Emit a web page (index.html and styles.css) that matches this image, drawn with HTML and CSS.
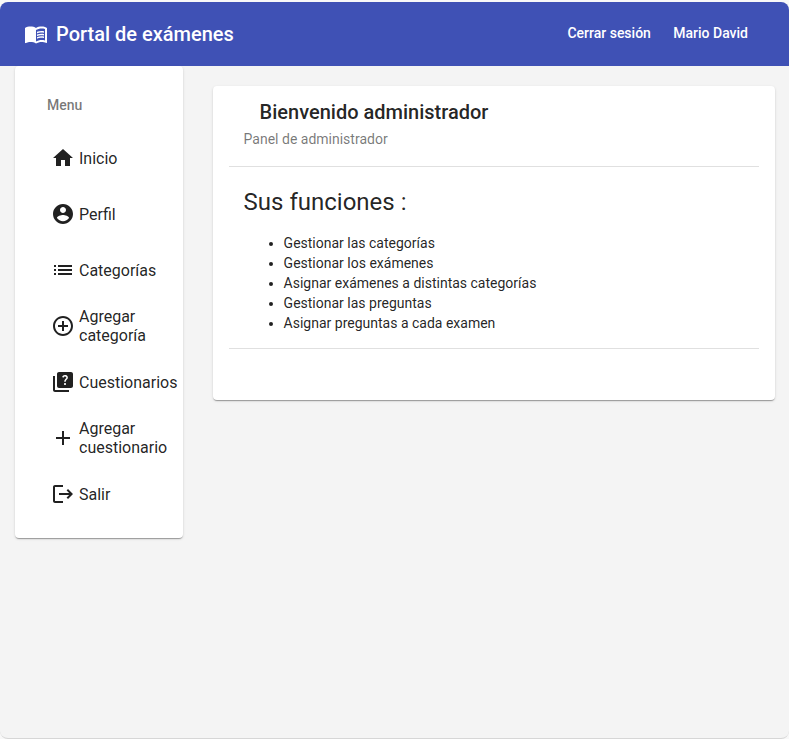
FILE: index.html
```html
<!DOCTYPE html>
<html lang="es">
<head>
<meta charset="utf-8">
<title>Portal de exámenes</title>
<link rel="stylesheet" href="styles.css">
</head>
<body>
<div class="window">
  <header class="toolbar">
    <svg class="icon" viewBox="0 0 24 24"><path d="M21 5c-1.11-.35-2.33-.5-3.5-.5-1.95 0-4.05.4-5.5 1.5-1.45-1.1-3.55-1.5-5.5-1.5S2.45 4.9 1 6v14.65c0 .25.25.5.5.5.1 0 .15-.05.25-.05C3.1 20.45 5.05 20 6.5 20c1.95 0 4.05.4 5.5 1.5 1.35-.85 3.8-1.5 5.5-1.5 1.65 0 3.35.3 4.75 1.05.1.05.15.05.25.05.25 0 .5-.25.5-.5V6c-.6-.45-1.25-.75-2-1zm0 13.5c-1.1-.35-2.3-.5-3.5-.5-1.7 0-4.15.65-5.5 1.5V8c1.35-.85 3.8-1.5 5.5-1.5 1.2 0 2.4.15 3.5.5v11.5z"/><path d="M17.5 10.5c.88 0 1.73.09 2.5.26V9.24c-.79-.15-1.64-.24-2.5-.24-1.7 0-3.24.29-4.5.83v1.66c1.13-.64 2.7-.99 4.5-.99zM13 12.49v1.66c1.13-.64 2.7-.99 4.5-.99.88 0 1.73.09 2.5.26V11.9c-.79-.15-1.64-.24-2.5-.24-1.7 0-3.24.3-4.5.83zM17.5 14.33c-1.7 0-3.24.29-4.5.83v1.66c1.13-.64 2.7-.99 4.5-.99.88 0 1.73.09 2.5.26v-1.52c-.79-.16-1.64-.24-2.5-.24z"/></svg>
    <h1 class="brand">Portal de exámenes</h1>
    <nav class="actions"><a>Cerrar sesión</a><a>Mario David</a></nav>
  </header>
  <div class="layout">
    <aside class="card sidebar">
      <h3 class="subheader">Menu</h3>
      <a class="item"><svg class="icon" viewBox="0 0 24 24"><path d="M10 20v-6h4v6h5v-8h3L12 3 2 12h3v8z"/></svg><span>Inicio</span></a>
      <a class="item"><svg class="icon" viewBox="0 0 24 24"><path d="M12 2C6.48 2 2 6.48 2 12s4.48 10 10 10 10-4.48 10-10S17.52 2 12 2zm0 3c1.66 0 3 1.34 3 3s-1.34 3-3 3-3-1.34-3-3 1.34-3 3-3zm0 14.2c-2.5 0-4.71-1.28-6-3.22.03-1.99 4-3.08 6-3.08 1.99 0 5.97 1.09 6 3.08-1.29 1.94-3.5 3.22-6 3.22z"/></svg><span>Perfil</span></a>
      <a class="item"><svg class="icon" viewBox="0 0 24 24"><path d="M3 13h2v-2H3v2zm0 4h2v-2H3v2zm0-8h2V7H3v2zm4 4h14v-2H7v2zm0 4h14v-2H7v2zM7 7v2h14V7H7z"/></svg><span>Categorías</span></a>
      <a class="item"><svg class="icon" viewBox="0 0 24 24"><path d="M13 7h-2v4H7v2h4v4h2v-4h4v-2h-4V7zm-1-5C6.48 2 2 6.48 2 12s4.48 10 10 10 10-4.48 10-10S17.52 2 12 2zm0 18c-4.41 0-8-3.59-8-8s3.59-8 8-8 8 3.59 8 8-3.59 8-8 8z"/></svg><span>Agregar categoría</span></a>
      <a class="item"><svg class="icon" viewBox="0 0 24 24"><path fill-rule="evenodd" d="M4 6H2v14c0 1.1.9 2 2 2h14v-2H4V6zM20 2H8c-1.1 0-2 .9-2 2v12c0 1.1.9 2 2 2h12c1.1 0 2-.9 2-2V4c0-1.1-.9-2-2-2zM14.01 15c-.59 0-1.05-.47-1.05-1.05 0-.59.47-1.04 1.05-1.04.59 0 1.04.45 1.04 1.04-.01.58-.45 1.05-1.04 1.05zM16.51 8.83c-.63.93-1.23 1.21-1.56 1.81-.13.24-.18.4-.18 1.18h-1.52c0-.41-.06-1.08.26-1.65.41-.73 1.18-1.16 1.63-1.8.48-.68.21-1.94-1.14-1.94-.88 0-1.32.67-1.5 1.23l-1.37-.57C11.51 5.96 12.52 5 13.99 5c1.23 0 2.08.56 2.51 1.26.37.61.58 1.73.01 2.57z"/></svg><span>Cuestionarios</span></a>
      <a class="item"><svg class="icon" viewBox="0 0 24 24"><path d="M19 13h-6v6h-2v-6H5v-2h6V5h2v6h6v2z"/></svg><span>Agregar cuestionario</span></a>
      <a class="item"><svg class="icon" viewBox="0 0 24 24"><path d="M17 7l-1.41 1.41L18.17 11H8v2h10.17l-2.58 2.58L17 17l5-5zM4 5h8V3H4c-1.1 0-2 .9-2 2v14c0 1.1.9 2 2 2h8v-2H4V5z"/></svg><span>Salir</span></a>
    </aside>
    <main class="card panel">
      <h2 class="title">Bienvenido administrador</h2>
      <p class="subtitle">Panel de administrador</p>
      <section class="content">
        <h2 class="heading">Sus funciones :</h2>
        <ul class="list">
          <li>Gestionar las categorías</li>
          <li>Gestionar los exámenes</li>
          <li>Asignar exámenes a distintas categorías</li>
          <li>Gestionar las preguntas</li>
          <li>Asignar preguntas a cada examen</li>
        </ul>
      </section>
    </main>
  </div>
</div>
</body>
</html>
```
FILE: styles.css
```css
* { box-sizing: border-box; }
html { background: #fff; }
body {
  margin: 0;
  padding-top: 2px;
  background: #f8f8f8;
  color: rgba(0, 0, 0, .87);
  font: 14px/20px Roboto, sans-serif;
}
h1, h2, h3, p, ul { margin: 0; }
.window {
  height: 737px;
  overflow: hidden;
  background: #f4f4f4;
  border-bottom: 1px solid #d6d6d6;
  border-radius: 8px;
}
.icon { width: 24px; height: 24px; flex: none; fill: currentColor; }
.toolbar {
  display: flex;
  align-items: center;
  height: 64px;
  padding: 0 41px 0 24px;
  background: #3f51b5;
  color: #fff;
}
.brand { margin-left: 8px; font-size: 20px; font-weight: 500; line-height: 32px; }
.actions { display: flex; gap: 22.4px; margin-left: auto; padding-bottom: 2px; font-weight: 500; }
.layout { display: flex; align-items: flex-start; padding: 0 14px 0 15px; }
.card {
  background: #fff;
  border-radius: 4px;
  box-shadow: 0 2px 1px -1px rgba(0, 0, 0, .2), 0 1px 1px rgba(0, 0, 0, .14), 0 1px 3px rgba(0, 0, 0, .12);
}
.sidebar { width: 168px; height: 472px; padding: 16px 0; }
.subheader {
  height: 48px;
  padding: 13px 32px;
  color: rgba(0, 0, 0, .54);
  font-size: 14px;
  font-weight: 500;
}
.item {
  display: flex;
  align-items: center;
  gap: 4px;
  height: 56px;
  padding-left: 36px;
  font-size: 16px;
  line-height: 19px;
}
.panel { flex: 1; height: 314px; margin: 20px 0 0 30px; padding: 10px 16px; }
.title { padding-left: 30.6px; font-size: 20px; font-weight: 500; line-height: 32px; }
.subtitle { padding: 1px 14.6px 17px; color: rgba(0, 0, 0, .54); }
.content {
  height: 183px;
  padding: 19px 14.6px 0;
  border: solid rgba(0, 0, 0, .12);
  border-width: 1px 0;
}
.heading { font-size: 24px; font-weight: 400; line-height: 32px; }
.list { margin-top: 15px; padding-left: 40px; }
```
